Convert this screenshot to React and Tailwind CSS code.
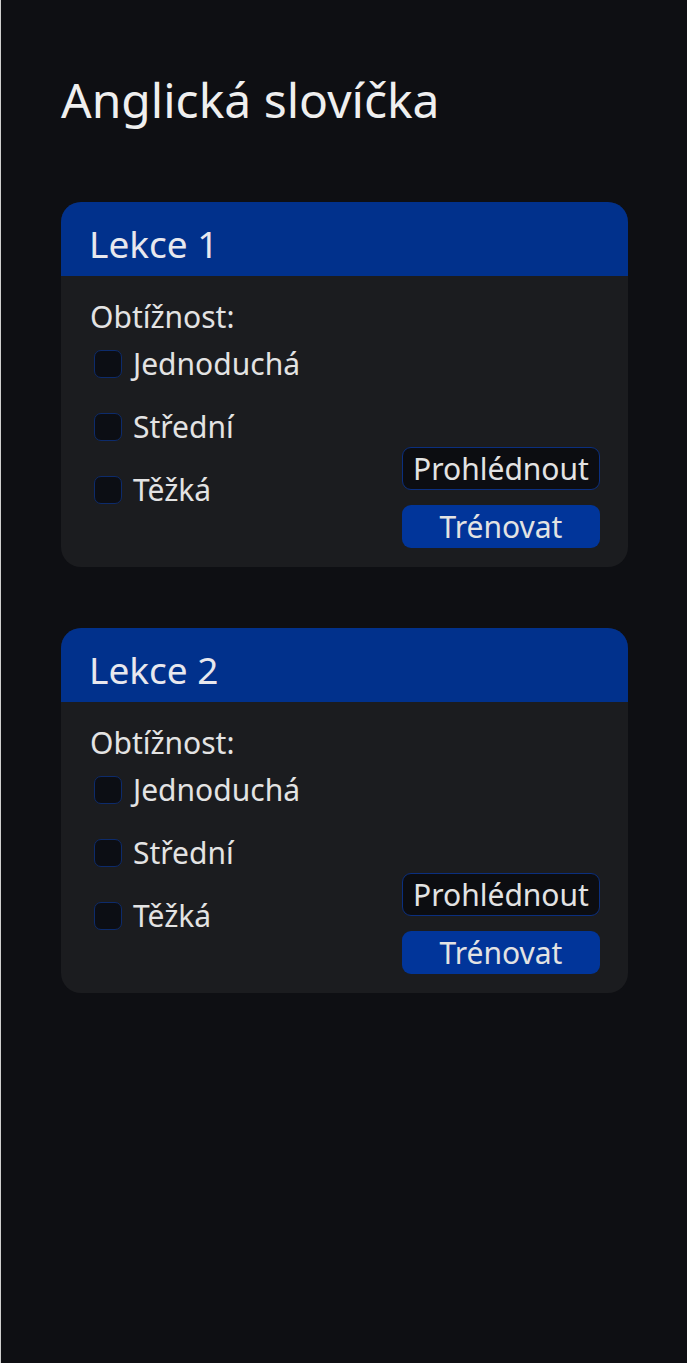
import { useState } from "react";

const lessons = [
  { id: 1, title: "Lekce 1" },
  { id: 2, title: "Lekce 2" },
];

const levels = ["Jednoduchá", "Střední", "Těžká"];

function LessonCard({ lesson }) {
  const [checked, setChecked] = useState({});

  const toggle = (level) =>
    setChecked((prev) => ({ ...prev, [level]: !prev[level] }));

  return (
    <div className="rounded-[20px] overflow-hidden bg-[#1b1c1f]">
      <div className="h-[74px] bg-[#01318c] px-[28px] pt-[18px]">
        <h2 className="text-[37px] leading-[48px] text-[#e8e8ee]">
          {lesson.title}
        </h2>
      </div>

      <div className="flex justify-between items-end pl-[29px] pr-[28px] pt-[21px] pb-[19px]">
        <div className="flex flex-col mb-[44px]">
          <p className="text-[30px] leading-[40px] text-[#e3e3e3]">Obtížnost:</p>
          <div className="flex flex-col gap-[35px] mt-[13px]">
            {levels.map((level) => (
              <label
                key={level}
                className="flex items-center h-[28px] gap-[11px] cursor-pointer"
              >
                <span
                  onClick={() => toggle(level)}
                  className={`ml-[4px] w-[28px] h-[28px] rounded-[7px] border-[1.5px] border-[#0d2b6b] ${
                    checked[level] ? "bg-[#01318c]" : "bg-[#0c0e14]"
                  }`}
                ></span>
                <span className="text-[30px] leading-[40px] text-[#e3e3e3]">
                  {level}
                </span>
              </label>
            ))}
          </div>
        </div>

        <div className="flex flex-col gap-[15px] w-[198px]">
          <button className="h-[43px] rounded-[9px] border border-[#0b2f7f] bg-[#0c0d11] text-[30px] leading-none text-[#e3e3e3]">
            Prohlédnout
          </button>
          <button className="h-[43px] rounded-[9px] bg-[#01359a] text-[30px] leading-none text-[#e3e3e3]">
            Trénovat
          </button>
        </div>
      </div>
    </div>
  );
}

export default function App() {
  return (
    <div
      className="min-h-screen bg-[#0e0f13] border-l border-[#cfcfcf] pl-[60px] pr-[59px] pt-[70px]"
      style={{ fontFamily: '"Noto Sans", sans-serif' }}
    >
      <h1 className="text-[48px] leading-[60px] text-[#efefef] mb-[72px]">
        Anglická slovíčka
      </h1>

      <div className="flex flex-col gap-[61px]">
        {lessons.map((lesson) => (
          <LessonCard key={lesson.id} lesson={lesson} />
        ))}
      </div>
    </div>
  );
}
